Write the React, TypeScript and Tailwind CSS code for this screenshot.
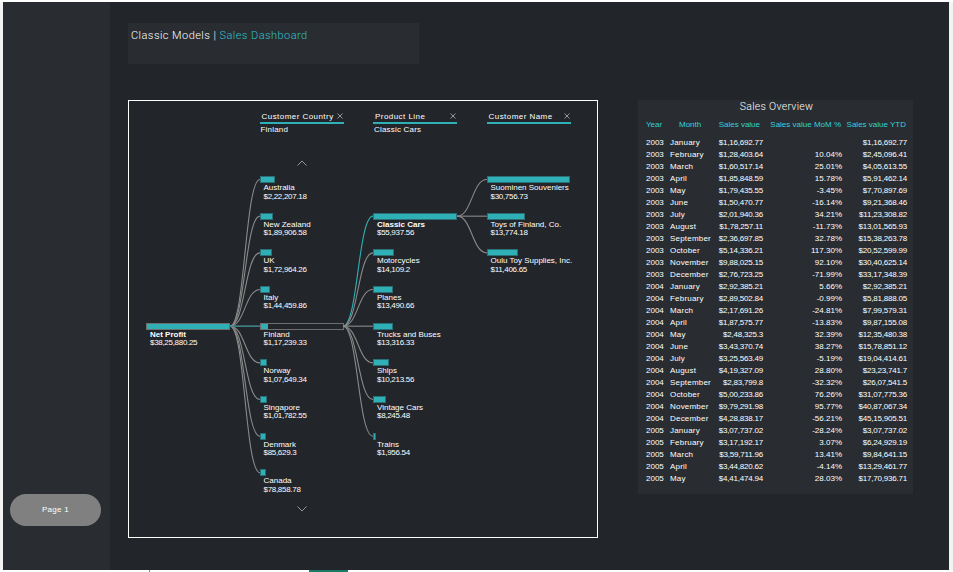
import React from "react";

const rows: [string, string, string, string, string][] = [
  ["2003","January","$1,16,692.77","","$1,16,692.77"],
  ["2003","February","$1,28,403.64","10.04%","$2,45,096.41"],
  ["2003","March","$1,60,517.14","25.01%","$4,05,613.55"],
  ["2003","April","$1,85,848.59","15.78%","$5,91,462.14"],
  ["2003","May","$1,79,435.55","-3.45%","$7,70,897.69"],
  ["2003","June","$1,50,470.77","-16.14%","$9,21,368.46"],
  ["2003","July","$2,01,940.36","34.21%","$11,23,308.82"],
  ["2003","August","$1,78,257.11","-11.73%","$13,01,565.93"],
  ["2003","September","$2,36,697.85","32.78%","$15,38,263.78"],
  ["2003","October","$5,14,336.21","117.30%","$20,52,599.99"],
  ["2003","November","$9,88,025.15","92.10%","$30,40,625.14"],
  ["2003","December","$2,76,723.25","-71.99%","$33,17,348.39"],
  ["2004","January","$2,92,385.21","5.66%","$2,92,385.21"],
  ["2004","February","$2,89,502.84","-0.99%","$5,81,888.05"],
  ["2004","March","$2,17,691.26","-24.81%","$7,99,579.31"],
  ["2004","April","$1,87,575.77","-13.83%","$9,87,155.08"],
  ["2004","May","$2,48,325.3","32.39%","$12,35,480.38"],
  ["2004","June","$3,43,370.74","38.27%","$15,78,851.12"],
  ["2004","July","$3,25,563.49","-5.19%","$19,04,414.61"],
  ["2004","August","$4,19,327.09","28.80%","$23,23,741.7"],
  ["2004","September","$2,83,799.8","-32.32%","$26,07,541.5"],
  ["2004","October","$5,00,233.86","76.26%","$31,07,775.36"],
  ["2004","November","$9,79,291.98","95.77%","$40,87,067.34"],
  ["2004","December","$4,28,838.17","-56.21%","$45,15,905.51"],
  ["2005","January","$3,07,737.02","-28.24%","$3,07,737.02"],
  ["2005","February","$3,17,192.17","3.07%","$6,24,929.19"],
  ["2005","March","$3,59,711.96","13.41%","$9,84,641.15"],
  ["2005","April","$3,44,820.62","-4.14%","$13,29,461.77"],
  ["2005","May","$4,41,474.94","28.03%","$17,70,936.71"],
];

type N = { name: string; value: string; w: number; frame?: boolean; bold?: boolean };

const col1: N[] = [{ name: "Net Profit", value: "$38,25,880.25", w: 82, frame: true, bold: true }];
const col2: N[] = [
  { name: "Australia", value: "$2,22,207.18", w: 15 },
  { name: "New Zealand", value: "$1,89,906.58", w: 13 },
  { name: "UK", value: "$1,72,964.26", w: 12 },
  { name: "Italy", value: "$1,44,459.86", w: 10 },
  { name: "Finland", value: "$1,17,239.33", w: 7, frame: true },
  { name: "Norway", value: "$1,07,649.34", w: 7 },
  { name: "Singapore", value: "$1,01,782.55", w: 7 },
  { name: "Denmark", value: "$85,629.3", w: 6 },
  { name: "Canada", value: "$78,858.78", w: 6 },
];
const col3: N[] = [
  { name: "Classic Cars", value: "$55,937.56", w: 84, bold: true },
  { name: "Motorcycles", value: "$14,109.2", w: 21 },
  { name: "Planes", value: "$13,490.66", w: 20 },
  { name: "Trucks and Buses", value: "$13,316.33", w: 20 },
  { name: "Ships", value: "$10,213.56", w: 16 },
  { name: "Vintage Cars", value: "$8,245.48", w: 13 },
  { name: "Trains", value: "$1,956.54", w: 3 },
];
const col4: N[] = [
  { name: "Suominen Souveniers", value: "$30,756.73", w: 83 },
  { name: "Toys of Finland, Co.", value: "$13,774.18", w: 38 },
  { name: "Oulu Toy Supplies, Inc.", value: "$11,406.65", w: 31 },
];

const slot = 36.67;
const y = (i: number) => 78.5 + i * slot;
const curve = (x0: number, y0: number, x1: number, y1: number) => {
  const m = (x0 + x1) / 2;
  return `M${x0} ${y0} C${m} ${y0} ${m} ${y1} ${x1} ${y1}`;
};

function Connectors() {
  return (
    <svg className="absolute inset-0 pointer-events-none" width="468" height="436" fill="none">
      {col2.map((_, i) => (
        <path key={i} d={curve(101, y(4), 131, y(i))} stroke="#8a8a8a" strokeWidth="1.1" />
      ))}
      {col3.map((_, i) => (
        <path key={i} d={curve(214, y(4), 244, y(i + 1))} stroke={i === 0 ? "#2fb0b7" : "#8a8a8a"} strokeWidth="1.1" />
      ))}
      {col4.map((_, i) => (
        <path key={i} d={curve(328, y(1), 358, y(i))} stroke="#8a8a8a" strokeWidth="1.1" />
      ))}
      <path d={curve(101, y(4), 131, y(4))} stroke="#1f8a90" strokeWidth="1" />
    </svg>
  );
}

function Node({ n }: { n: N }) {
  return (
    <div className="h-[36.67px] w-[84px] flex flex-col">
      <div className={n.frame ? "h-[7px] w-[84px] border border-[#6e6e6e] box-border" : "h-[7px]"}>
        <div
          className={n.frame ? "h-full bg-[#2fb0b7]" : "h-full bg-[#2fb0b7] border border-[#2a6f75] box-border"}
          style={{ width: n.w }}
        />
      </div>
      <div className="pl-[4px] pt-[1px] text-[8px] leading-[8.5px] text-white whitespace-nowrap">
        <div className={n.bold ? "font-bold" : ""}>{n.name}</div>
        <div className="tracking-[-0.3px]">{n.value}</div>
      </div>
    </div>
  );
}

function X() {
  return (
    <svg width="6" height="6" viewBox="0 0 6 6" fill="none" stroke="#c8c8c8" strokeWidth="0.7" className="mb-[3px]">
      <path d="M0.5 0.5 L5.5 5.5 M5.5 0.5 L0.5 5.5" />
    </svg>
  );
}

function Head({ title, value }: { title: string; value: string }) {
  return (
    <div className="w-[84px] h-[33px] pt-[9px]">
      <div className="h-[12px] flex items-end justify-between border-b-2 border-[#2fb0b7] pl-[2px] pr-[1px] text-[8px] leading-[10px] tracking-[0.45px] text-white whitespace-nowrap box-content">
        <span>{title}</span>
        <X />
      </div>
      <div className="pl-[1px] pt-[1px] text-[8px] leading-[9px] text-white tracking-[0.2px]">{value}</div>
    </div>
  );
}

function Tree() {
  return (
    <div className="relative w-[470px] h-[438px] shrink-0 border border-white flex gap-[29.5px] pl-[17px]">
      <Connectors />
      <div className="w-[84px] pt-[221.5px]">
        {col1.map((n) => <Node key={n.name} n={n} />)}
      </div>
      <div className="w-[84px]">
        <Head title="Customer Country" value="Finland" />
        <div className="h-[42px] flex justify-center items-start pt-[26px]">
          <svg width="10" height="6" viewBox="0 0 10 6" fill="none" stroke="#b4b4b4" strokeWidth="0.8">
            <path d="M0.5 5.5 L5 1 L9.5 5.5" />
          </svg>
        </div>
        {col2.map((n) => <Node key={n.name} n={n} />)}
        <div className="flex justify-center">
          <svg width="10" height="6" viewBox="0 0 10 6" fill="none" stroke="#b4b4b4" strokeWidth="0.8">
            <path d="M0.5 0.5 L5 5 L9.5 0.5" />
          </svg>
        </div>
      </div>
      <div className="w-[84px]">
        <Head title="Product Line" value="Classic Cars" />
        <div className="pt-[78.67px]">
          {col3.map((n) => <Node key={n.name} n={n} />)}
        </div>
      </div>
      <div className="w-[84px]">
        <Head title="Customer Name" value="" />
        <div className="pt-[42px]">
          {col4.map((n) => <Node key={n.name} n={n} />)}
        </div>
      </div>
    </div>
  );
}

function Table() {
  const grid = "grid grid-cols-[24px_48px_45px_79px_65px]";
  return (
    <div className="w-[275px] h-[394px] bg-[#292d32] pl-[8px] pr-[6px] text-white">
      <div className="text-center text-[10.5px] leading-[13px] font-light tracking-[0.3px] text-white" style={{ fontFamily: '"Roboto", sans-serif' }}>Sales Overview</div>
      <div className={`${grid} mt-[6px] h-[17.5px] text-[8px] leading-[12px] text-[#35d0d8] whitespace-nowrap`}>
        <div>Year</div>
        <div className="pl-[9px]">Month</div>
        <div className="text-right pr-[3px]">Sales value</div>
        <div className="text-right pr-[1px]">Sales value MoM %</div>
        <div className="text-right pr-[1px]">Sales value YTD</div>
      </div>
      {rows.map((r, i) => (
        <div key={i} className={`${grid} h-[12px] text-[8px] leading-[12px] whitespace-nowrap`}>
          <div>{r[0]}</div>
          <div className="tracking-[0.2px]">{r[1]}</div>
          <div className="text-right tracking-[-0.2px]">{r[2]}</div>
          <div className="text-right">{r[3]}</div>
          <div className="text-right tracking-[-0.2px]">{r[4]}</div>
        </div>
      ))}
    </div>
  );
}

export default function App() {
  return (
    <div className="w-[953px] h-[572px] overflow-hidden bg-[#f3f3f3] flex flex-col" style={{ fontFamily: '"Liberation Sans", Arial, sans-serif' }}>
      <div className="h-[2px] bg-white" />
      <div className="h-[568px] flex pl-[3px] pr-[4px]">
        <aside className="w-[107px] h-full bg-[#292d32] flex flex-col justify-end pb-[44px] pl-[7px]">
          <div className="w-[91px] h-[32px] rounded-full bg-[#808080] flex items-center justify-center text-white text-[8px] tracking-[0.3px]">Page 1</div>
        </aside>
        <main className="flex-1 bg-[#22252a] pl-[18px] pt-[21px]">
          <div className="w-[291px] h-[41px] bg-[#292d32] pl-[3px] pt-[6px] text-[11px] leading-[14px] font-light tracking-[0.45px] text-white" style={{ fontFamily: '"Roboto", sans-serif' }}>
            Classic Models | <span className="text-[#33c0c8]">Sales Dashboard</span>
          </div>
          <div className="mt-[36px] flex items-start gap-[40px]">
            <Tree />
            <Table />
          </div>
        </main>
      </div>
      <div className="flex-1 bg-white flex">
        <div className="ml-[149px] w-px bg-[#888]" />
        <div className="ml-[159px] w-[39px] bg-[#1a7a63]" />
      </div>
    </div>
  );
}
